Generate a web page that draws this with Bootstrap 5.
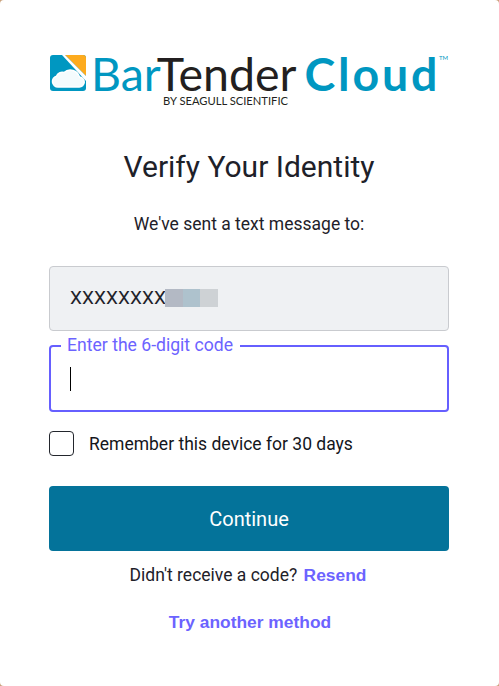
<!doctype html>
<html lang="en"><head><meta charset="utf-8"><title>Verify Your Identity</title>
<link href="https://cdn.jsdelivr.net/npm/bootstrap@5.3.0/dist/css/bootstrap.min.css" rel="stylesheet">
<style>
html,body{height:100%;}
body{background:#c9a27c;font-family:Roboto,"Liberation Sans",sans-serif;color:#1e2129;overflow:hidden;}
.shell{width:499px;height:686px;background:#fff;border-radius:4px;padding:51px 50px 0 49px;}
.brand{height:60px;gap:6px;padding-left:1px;}
.brand-words{position:relative;font-family:Lato,sans-serif;line-height:1;height:60px;}
.brand-main{font-size:46.5px;line-height:42px;white-space:nowrap;display:block;margin-top:1px;margin-left:-1px;}
.c-blue,.c-dark,.c-cloud{display:inline-block;}
.c-blue{color:#0097c1;}
.c-dark{color:#231f20;margin-left:-4px;}
.c-cloud{color:#0097c1;font-weight:700;margin-left:8px;letter-spacing:2.8px;}
.c-end{letter-spacing:0;}
.brand-tm{font-size:6px;position:absolute;left:347px;top:4px;color:#0097c1;}
.brand-by{position:absolute;left:71px;top:44px;font-size:11.2px;color:#231f20;white-space:nowrap;}
.heading{font-size:30px;font-weight:400;line-height:36px;margin:38px 0 0;}
.sent{font-size:17.5px;line-height:24px;margin:27px 0 0;}
.phone{height:65px;margin-top:30px;background:#eff1f3;border:1px solid #c9cbcf;border-radius:4px;padding-left:20px;font-size:19px;position:relative;overflow:hidden;letter-spacing:.1px;}
.blur{position:absolute;top:22px;height:18px;}
.b1{left:115px;width:18px;background:#b3b9c4;}.b2{left:133px;width:17px;background:#aec2cd;}.b3{left:150px;width:18px;background:#ced2d5;}
.code-field{position:relative;height:67px;margin-top:14px;}
.code-input{height:67px;border:2px solid #665fff;border-radius:4px;padding:0 0 0 20px;font-size:19px;caret-color:#000;background:#fff;}
.code-input:focus{border-color:#665fff;box-shadow:none;}
.code-label{position:absolute;left:12px;top:-10px;padding:0 7px 0 6px;background:#fff;color:#6c63ff;font-size:17.6px;line-height:20px;}
.caret-bar{position:absolute;left:21px;top:22px;width:1px;height:24px;background:#000;}
.remember{margin-top:19px;gap:15px;height:25px;}
.tick{width:25px;height:25px;margin:0;border:1px solid #23262d;border-radius:4px;flex:none;float:none;}
.form-check-input.tick{margin:0;}
.remember label{font-size:17.5px;color:#14161c;padding-top:1px;}
.go{height:65px;width:100%;margin-top:30px;background:#04739a;border:0;border-radius:4px;color:#fff;font-size:20px;}
.go:hover{background:#04739a;color:#fff;}
.again{margin-top:12px;font-size:17.5px;line-height:24px;padding-right:2px;}
.linkish{color:#6c63ff;font-weight:700;text-decoration:none;font-family:"Liberation Sans",Arial,sans-serif;}
.again .linkish{font-size:17.4px;margin-left:2px;}
.other{margin-top:23px;font-size:17.4px;line-height:24px;padding-left:2px;}
</style></head><body>
<main class="shell">
<div class="brand d-flex align-items-start">
<svg width="36" height="36" viewBox="0 0 36 36" class="flex-shrink-0 mt-1" aria-hidden="true">
<rect x="0" y="0" width="36" height="36" rx="3" fill="#0097c1"/>
<path d="M15 0H33a3 3 0 0 1 3 3V21Z" fill="#fdab1e"/>
<path d="M15 0L36 21V26L12 0Z" fill="#fff"/>
<path d="M8 32a5.500 5.500 0 0 1-1.500-10.800a6 6 0 0 1 7.500-3.700a9.500 9.500 0 0 1 15.500 4.500a5 5 0 0 1-.5 10Z" fill="#f4fbfd" stroke="#fff" stroke-width="1.500"/>
</svg>
<div class="brand-words">
<span class="brand-main"><span class="c-blue">Bar</span><span class="c-dark">Tender</span><span class="c-cloud">Clou<span class="c-end">d</span></span></span>
<span class="brand-tm">TM</span>
<span class="brand-by">BY SEAGULL SCIENTIFIC</span>
</div>
</div>
<h1 class="heading text-center">Verify Your Identity</h1>
<p class="sent text-center">We've sent a text message to:</p>
<div class="phone d-flex align-items-center">XXXXXXXX<span class="blur b1"></span><span class="blur b2"></span><span class="blur b3"></span></div>
<div class="code-field">
<input class="form-control code-input" type="text" aria-label="Enter the 6-digit code">
<span class="caret-bar"></span>
<span class="code-label">Enter the 6-digit code</span>
</div>
<div class="remember d-flex align-items-center">
<input class="form-check-input tick" type="checkbox" id="rem">
<label for="rem">Remember this device for 30 days</label>
</div>
<button class="btn go" type="button">Continue</button>
<p class="again text-center mb-0">Didn't receive a code? <a href="#" class="linkish">Resend</a></p>
<p class="other text-center mb-0"><a href="#" class="linkish">Try another method</a></p>
</main>
<script src="https://cdn.jsdelivr.net/npm/bootstrap@5.3.0/dist/js/bootstrap.bundle.min.js"></script>
</body></html>
